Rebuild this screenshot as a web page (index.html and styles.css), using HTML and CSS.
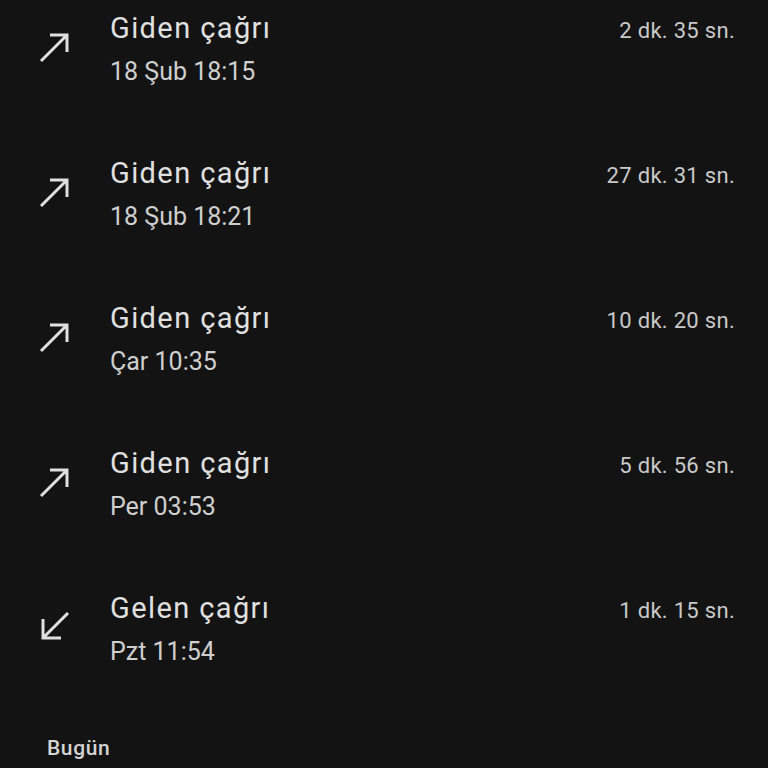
FILE: index.html
```html
<!DOCTYPE html>
<html lang="tr">
<head>
<meta charset="utf-8">
<link rel="stylesheet" href="styles.css">
</head>
<body>
<div class="list">
  <div class="row">
    <svg class="icon" viewBox="0 0 32 32"><path d="M3 29 L29 3 M12 3 H29 V20"/></svg>
    <div class="body">
      <div class="top"><span class="title">Giden çağrı</span><span class="dur">2 dk. 35 sn.</span></div>
      <div class="sub">18 Şub 18:15</div>
    </div>
  </div>
  <div class="row">
    <svg class="icon" viewBox="0 0 32 32"><path d="M3 29 L29 3 M12 3 H29 V20"/></svg>
    <div class="body">
      <div class="top"><span class="title">Giden çağrı</span><span class="dur">27 dk. 31 sn.</span></div>
      <div class="sub">18 Şub 18:21</div>
    </div>
  </div>
  <div class="row">
    <svg class="icon" viewBox="0 0 32 32"><path d="M3 29 L29 3 M12 3 H29 V20"/></svg>
    <div class="body">
      <div class="top"><span class="title">Giden çağrı</span><span class="dur">10 dk. 20 sn.</span></div>
      <div class="sub">Çar 10:35</div>
    </div>
  </div>
  <div class="row">
    <svg class="icon" viewBox="0 0 32 32"><path d="M3 29 L29 3 M12 3 H29 V20"/></svg>
    <div class="body">
      <div class="top"><span class="title">Giden çağrı</span><span class="dur">5 dk. 56 sn.</span></div>
      <div class="sub">Per 03:53</div>
    </div>
  </div>
  <div class="row">
    <svg class="icon" viewBox="0 0 32 32"><path d="M30 1 L5 26 M5 7 V26 H23"/></svg>
    <div class="body">
      <div class="top"><span class="title">Gelen çağrı</span><span class="dur">1 dk. 15 sn.</span></div>
      <div class="sub">Pzt 11:54</div>
    </div>
  </div>
</div>
<div class="section">Bugün</div>
</body>
</html>
```
FILE: styles.css
```css
html, body {
  margin: 0;
  background: #131313;
}
body {
  font-family: Roboto, "Noto Sans", sans-serif;
  width: 768px;
  height: 768px;
  overflow: hidden;
}
.row {
  display: flex;
  box-sizing: border-box;
  height: 145px;
  padding: 10px 33px 0 38px;
}
.icon {
  width: 32px;
  height: 32px;
  margin-top: 22px;
  margin-right: 40px;
  flex: none;
  fill: none;
  stroke: #e0e0e0;
  stroke-width: 3;
}
.body {
  flex: 1;
}
.top {
  display: flex;
  justify-content: space-between;
  align-items: baseline;
}
.title {
  font-size: 29px;
  line-height: 36px;
  letter-spacing: 1.4px;
  color: #e0e0e0;
}
.dur {
  font-size: 22px;
  letter-spacing: 0.3px;
  color: #c9c9c9;
}
.sub {
  margin-top: 11px;
  font-size: 25px;
  line-height: 30px;
  color: #cfcfcf;
}
.section {
  margin-top: 11px;
  padding-left: 47px;
  font-size: 21px;
  line-height: 24px;
  letter-spacing: 0.6px;
  font-weight: 500;
  color: #d4d4d4;
}
```
